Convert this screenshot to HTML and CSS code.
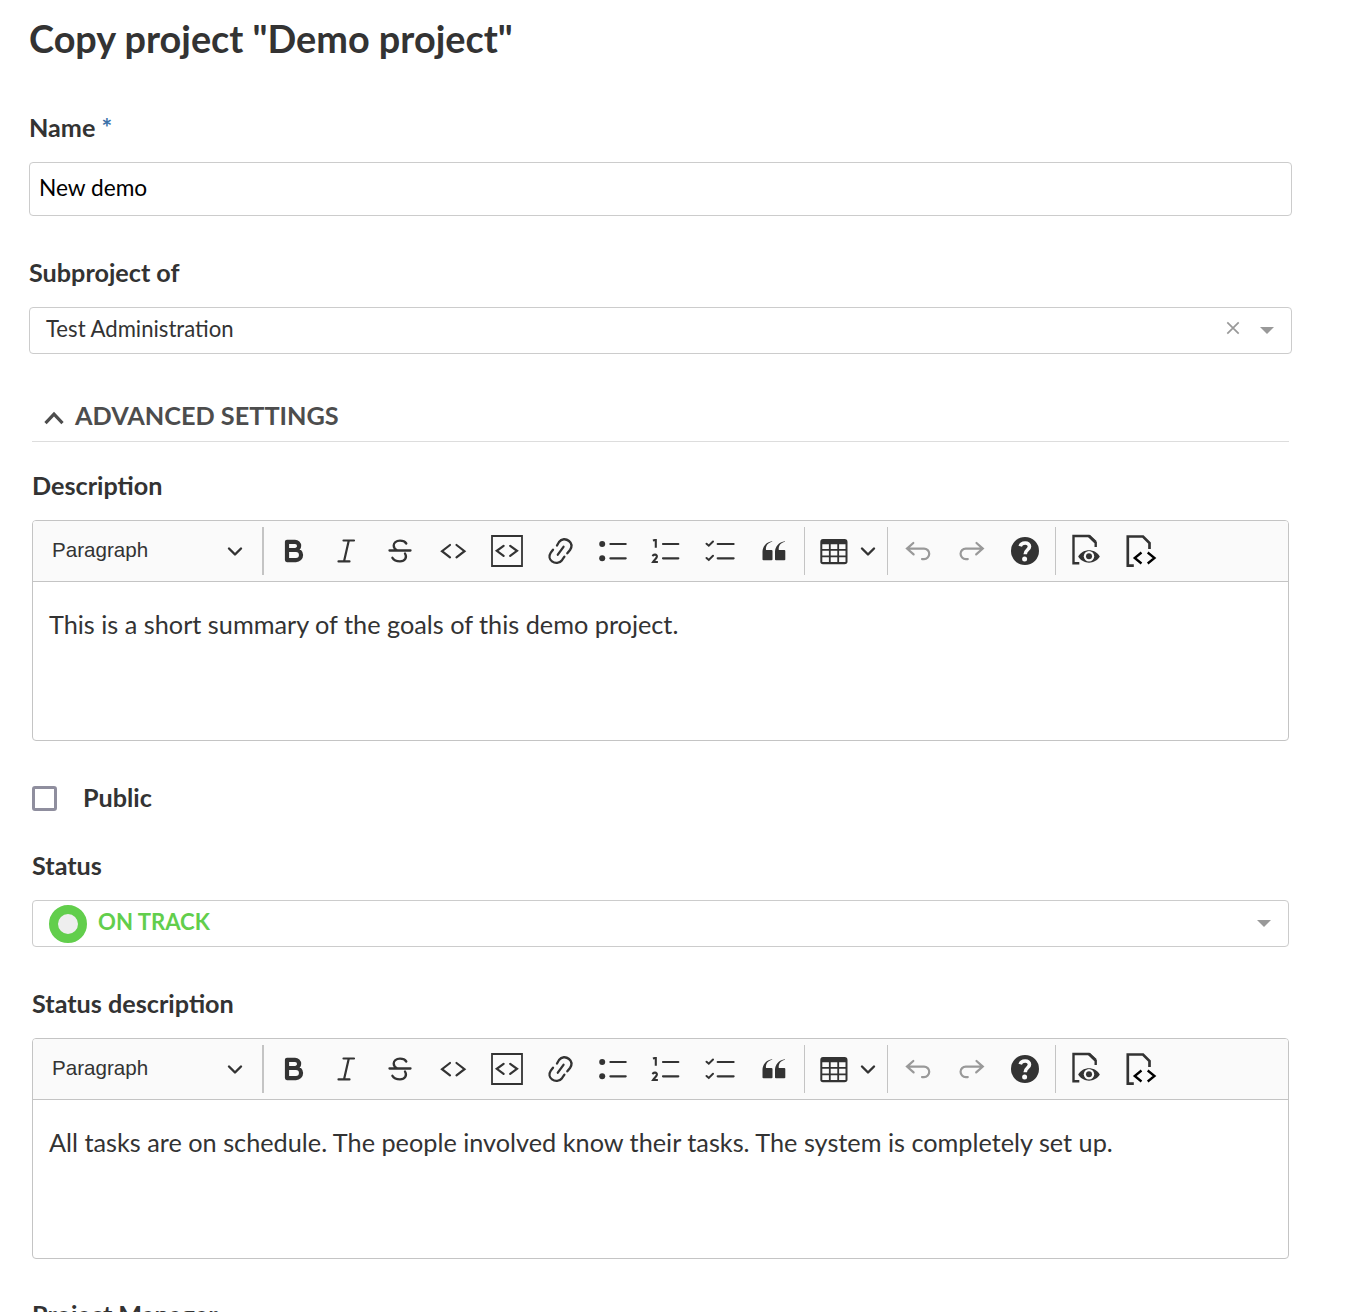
FILE: index.html
```html
<!DOCTYPE html>
<html lang="en">
<head>
<meta charset="utf-8">
<title>Copy project</title>
<link rel="stylesheet" href="styles.css">
</head>
<body>
<svg class="sprite" aria-hidden="true">
  <symbol id="bold" viewBox="0 0 40 40"><path d="M14 10.8h8a4 4 0 0 1 0 8.200h-8M14 19h9a4.700 4.700 0 0 1 0 10.100h-9zV10.800V29" fill="none" stroke="currentColor" stroke-width="4.200" stroke-linejoin="round"/></symbol>
  <symbol id="italic" viewBox="0 0 40 40"><path d="M17.500 9.500H28M12.500 30.400H23.500M22.800 9.500L18 30.400" fill="none" stroke="currentColor" stroke-width="2.200" stroke-linecap="round"/></symbol>
  <symbol id="strike" viewBox="0 0 40 40"><path d="M9.500 19.500H30.500M26.300 12.500C25 10.500 23 9.700 20 9.700C16 9.700 13.700 11.800 13.700 14.500C13.700 17 15.200 18.500 17.500 19.500M25 22.500C27.400 26.500 25 30.300 20 30.300C16.300 30.300 13.700 29 12.400 26.800" fill="none" stroke="currentColor" stroke-width="2.300" stroke-linecap="round"/></symbol>
  <symbol id="code" viewBox="0 0 40 40"><path d="M17 14L9 20.200L17 26.400M23.500 14L31.500 20.200L23.500 26.400" fill="none" stroke="currentColor" stroke-width="2.200" stroke-linecap="round"/></symbol>
  <symbol id="codeblock" viewBox="0 0 40 40"><path d="M5 5H35V35H5z" fill="none" stroke="currentColor" stroke-width="1.800"/><path d="M16.600 14.800L9.800 19.800L16.600 24.800M23.200 14.800L30 19.800L23.200 24.800" fill="none" stroke="currentColor" stroke-width="2.200" stroke-linecap="round"/></symbol>
  <symbol id="link" viewBox="0 0 40 40"><path d="M17 14.500L19 11C21.500 7.500 26 7.500 29 10C32 12.500 32 16 30 19L27.300 22.300M13 18.700L10.800 21.600C8.500 25 9.500 28.500 12 30.400C15 32.700 19.500 32.500 22 29.200L24.400 25.600M17.800 23.700L23.500 15.800" fill="none" stroke="currentColor" stroke-width="2.300" stroke-linecap="round"/></symbol>
  <symbol id="bullets" viewBox="0 0 40 40"><circle cx="8.200" cy="13" r="3"/><circle cx="8.200" cy="27.300" r="3"/><path d="M16.400 13H31.700M16.400 27.300H31.700" fill="none" stroke="currentColor" stroke-width="2.200" stroke-linecap="round"/></symbol>
  <symbol id="numbers" viewBox="0 0 40 40"><path d="M16 13H31.300M16 27.300H31.300" fill="none" stroke="currentColor" stroke-width="2.200" stroke-linecap="round"/><path d="M5.900 9.500L7.800 9H8.800V16.700M5.700 25.300C6.300 22.800 10.200 23.300 9.900 25.600C9.800 27.200 7.500 28.600 6 31H10.900" fill="none" stroke="currentColor" stroke-width="2.100"/></symbol>
  <symbol id="todo" viewBox="0 0 40 40"><path d="M16.700 13H32.600M16.700 27.300H32.600" fill="none" stroke="currentColor" stroke-width="2.200" stroke-linecap="round"/><path d="M5.500 12.700L7.800 14.700L12 10.500M5.500 27L7.800 29L12 24.800" fill="none" stroke="currentColor" stroke-width="2" stroke-linecap="round"/></symbol>
  <symbol id="quote" viewBox="0 0 40 40"><path d="M18.200 10.800C13.500 12 11.500 15 12 19H17.500Q18.500 19 18.500 20V28.500Q18.500 29.300 17.500 29.300H9.500Q8.500 29.300 8.500 28.500V21C8.500 15.500 12 11 18.200 10.200zM31 10.800C26.300 12 24.300 15 24.800 19H30.300Q31.300 19 31.300 20V28.500Q31.300 29.300 30.300 29.300H22Q21 29.300 21 28.500V21C21 15.500 24.800 11 31 10.200z"/></symbol>
  <symbol id="table" viewBox="0 0 40 40"><path fill-rule="evenodd" d="M9 8H30.500Q33.500 8 33.500 11V30.500Q33.500 33.300 30.500 33.300H9Q6.300 33.300 6.300 30.500V11Q6.300 8 9 8zM8.300 13.200V18H14.900V13.200zM16.700 13.200V18H23.300V13.200zM25.100 13.200V18H31.500V13.200zM8.300 19.800V24.500H14.900V19.800zM16.700 19.800V24.500H23.300V19.800zM25.100 19.800V24.500H31.500V19.800zM8.300 26.300V31H14.900V26.300zM16.700 26.300V31H23.300V26.300zM25.100 26.300V31H31.500V26.300z"/></symbol>
  <symbol id="undo" viewBox="0 0 40 40"><path d="M15.300 12L9 17.600L15.600 23.400M9 17.600H26A5 5 0 0 1 26 28.100H24" fill="none" stroke="currentColor" stroke-width="2.200" stroke-linecap="round"/></symbol>
  <symbol id="redo" viewBox="0 0 40 40"><path d="M24.500 12L30.800 17.600L24.200 23.400M30.800 17.600H13.800A5 5 0 0 0 13.800 28.100H15.800" fill="none" stroke="currentColor" stroke-width="2.200" stroke-linecap="round"/></symbol>
  <symbol id="help" viewBox="0 0 40 40"><circle cx="20" cy="20" r="14"/><path d="M15.200 15.300C16.500 10.700 24.500 11 24.500 15.500C24.500 19 20.200 18.600 20.200 23.300" fill="none" stroke="#fafafa" stroke-width="3.600"/><circle cx="19.600" cy="28" r="2.500" fill="#fafafa"/></symbol>
  <symbol id="preview" viewBox="0 0 40 40"><path d="M13.300 32.300H7.500V5H23L29.700 11.500V16" fill="none" stroke="currentColor" stroke-width="2.400"/><path d="M23 5L29.500 11.200" stroke="currentColor" stroke-width="3"/><path d="M12.200 25.500C17 17.300 29 17.300 33.800 25.500C29 33.700 17 33.700 12.200 25.500z"/><circle cx="23" cy="25.300" r="5.200" fill="#fafafa"/><circle cx="23" cy="25.300" r="3"/></symbol>
  <symbol id="source" viewBox="0 0 40 40"><path d="M13.800 34.600H7.800V5.500H23L29.500 12V18" fill="none" stroke="currentColor" stroke-width="2.700"/><path d="M21.500 21.500L14.700 27L21.500 32.500M27.700 21.500L34.500 27L27.700 32.500" fill="none" stroke="#000" stroke-width="2.300"/></symbol>
  <symbol id="chevron" viewBox="0 0 16 16"><path d="M2 5.500L8 11.500L14 5.500" fill="none" stroke="currentColor" stroke-width="2.400" stroke-linecap="round" stroke-linejoin="round"/></symbol>
</svg>
<main class="page">
  <h1 class="title">Copy project "Demo project"</h1>
  <label class="label name-label">Name <span class="required">*</span></label>
  <div class="input">New demo</div>
  <label class="label parent-label">Subproject of</label>
  <div class="select">
    <span class="select-value">Test Administration</span>
    <svg class="clear" viewBox="0 0 14 14"><path d="M1.300 1.300L12.700 12.700M12.700 1.300L1.300 12.700" stroke="#999" stroke-width="1.700"/></svg>
    <span class="caret"></span>
  </div>
  <section class="advanced">
    <h2 class="legend"><svg class="legend-icon" viewBox="0 0 20 14"><path d="M1.500 12.200L10 3.200L18.500 12.200" fill="none" stroke="currentColor" stroke-width="3.200"/></svg><span>ADVANCED SETTINGS</span></h2>
    <label class="label description-label">Description</label>
    <div class="editor">
      <div class="toolbar">
        <div class="dropdown"><span>Paragraph</span><svg class="chevron"><use href="#chevron"/></svg></div>
        <div class="group group-format">
          <svg><use href="#bold"/></svg><svg><use href="#italic"/></svg><svg><use href="#strike"/></svg><svg><use href="#code"/></svg><svg><use href="#codeblock"/></svg><svg><use href="#link"/></svg><svg><use href="#bullets"/></svg><svg><use href="#numbers"/></svg><svg><use href="#todo"/></svg><svg><use href="#quote"/></svg>
        </div>
        <div class="group group-table"><svg><use href="#table"/></svg><svg class="chevron"><use href="#chevron"/></svg></div>
        <div class="group group-history"><svg class="off"><use href="#undo"/></svg><svg class="off"><use href="#redo"/></svg><svg><use href="#help"/></svg></div>
        <div class="group group-view"><svg><use href="#preview"/></svg><svg><use href="#source"/></svg></div>
      </div>
      <p class="content">This is a short summary of the goals of this demo project.</p>
    </div>
    <div class="check-row"><span class="checkbox"></span><label class="label">Public</label></div>
    <label class="label status-label">Status</label>
    <div class="select status-select">
      <span class="status-dot"></span>
      <span class="status-value">ON TRACK</span>
      <span class="caret"></span>
    </div>
    <label class="label status-text-label">Status description</label>
    <div class="editor">
      <div class="toolbar">
        <div class="dropdown"><span>Paragraph</span><svg class="chevron"><use href="#chevron"/></svg></div>
        <div class="group group-format">
          <svg><use href="#bold"/></svg><svg><use href="#italic"/></svg><svg><use href="#strike"/></svg><svg><use href="#code"/></svg><svg><use href="#codeblock"/></svg><svg><use href="#link"/></svg><svg><use href="#bullets"/></svg><svg><use href="#numbers"/></svg><svg><use href="#todo"/></svg><svg><use href="#quote"/></svg>
        </div>
        <div class="group group-table"><svg><use href="#table"/></svg><svg class="chevron"><use href="#chevron"/></svg></div>
        <div class="group group-history"><svg class="off"><use href="#undo"/></svg><svg class="off"><use href="#redo"/></svg><svg><use href="#help"/></svg></div>
        <div class="group group-view"><svg><use href="#preview"/></svg><svg><use href="#source"/></svg></div>
      </div>
      <p class="content">All tasks are on schedule. The people involved know their tasks. The system is completely set up.</p>
    </div>
    <label class="label manager-label">Project Manager</label>
  </section>
</main>
</body>
</html>
```
FILE: styles.css
```css
* { box-sizing: border-box; }
body { margin: 0; background: #fff; color: #333; font-family: Lato, sans-serif; }
.sprite { display: none; }
.page { height: 1312px; overflow: hidden; padding: 16px 78px 0 29px; }
.title { margin: 0; font-size: 37.850px; line-height: 46px; font-weight: 700; }
.label { display: block; font-size: 25.200px; line-height: 30px; font-weight: 700; white-space: nowrap; }
.name-label { margin: 50px 0 20px; }
.required { color: #3a70a8; }
.input { height: 54px; padding: 0 9px 3px; display: flex; align-items: center; border: 1px solid #ccc; border-radius: 4px; color: #000; font-size: 22.700px; }
.parent-label { margin: 41px 0 20px; }
.select { height: 47px; padding: 0 17px 0 16px; display: flex; align-items: center; border: 1px solid #ccc; border-radius: 4px; font-size: 22.150px; }
.select-value { flex: 1; padding-bottom: 4px; }
.clear { width: 14px; height: 14px; margin: 0 20px 6px 0; }
.caret { border: solid transparent; border-width: 7px 7px 0; border-top-color: #999; }
.advanced { margin: 45px 3px 0; }
.legend { display: flex; align-items: center; height: 43px; margin: 0; padding: 0 0 10px 12px; gap: 11px; border-bottom: 1px solid #ddd; color: #4d4d4d; font-size: 25.270px; line-height: 30px; }
.legend-icon { width: 20px; height: 14px; margin-top: 5px; }
.description-label { margin: 28px 0 20px; }
.editor { height: 221px; border: 1px solid #c4c4c4; border-radius: 4px; overflow: hidden; }
.toolbar { display: flex; align-items: center; height: 61px; background: #fafafa; border-bottom: 1px solid #c4c4c4; }
.toolbar svg { flex: none; width: 40px; height: 40px; fill: currentColor; }
.toolbar .chevron { width: 16px; height: 16px; }
.toolbar .off { color: #999; }
.dropdown { display: flex; align-items: center; justify-content: space-between; width: 229px; padding: 0 19px; font-family: "Liberation Sans", sans-serif; font-size: 20.600px; }
.dropdown span { padding-bottom: 2px; }
.group { display: flex; align-items: center; height: 48px; border-left: 1px solid #c4c4c4; }
.group-format { width: 542px; padding-left: 9px; gap: 13.450px; border-left-width: 2px; }
.group-table { width: 83px; padding-left: 9px; gap: 6px; }
.group-history { width: 168px; padding-left: 10px; gap: 13.500px; }
.group-view { padding-left: 10px; gap: 14px; }
.content { margin: 0; padding: 27px 16px; font-size: 25.280px; line-height: 30px; white-space: nowrap; }
.check-row { display: flex; align-items: flex-start; gap: 26px; margin-top: 41px; }
.checkbox { width: 25px; height: 25px; margin-top: 4px; border: 3px solid #8f8e9e; border-radius: 3px; }
.status-label { margin: 38px 0 20px; }
.status-dot { width: 38px; height: 38px; border: 9px solid #62ce4c; border-radius: 50%; background: #eee; }
.status-value { flex: 1; padding: 0 0 5px 11px; color: #62ce4c; font-weight: 700; }
.status-text-label { margin: 41px 0 20px; }
.manager-label { margin-top: 40px; }
```
